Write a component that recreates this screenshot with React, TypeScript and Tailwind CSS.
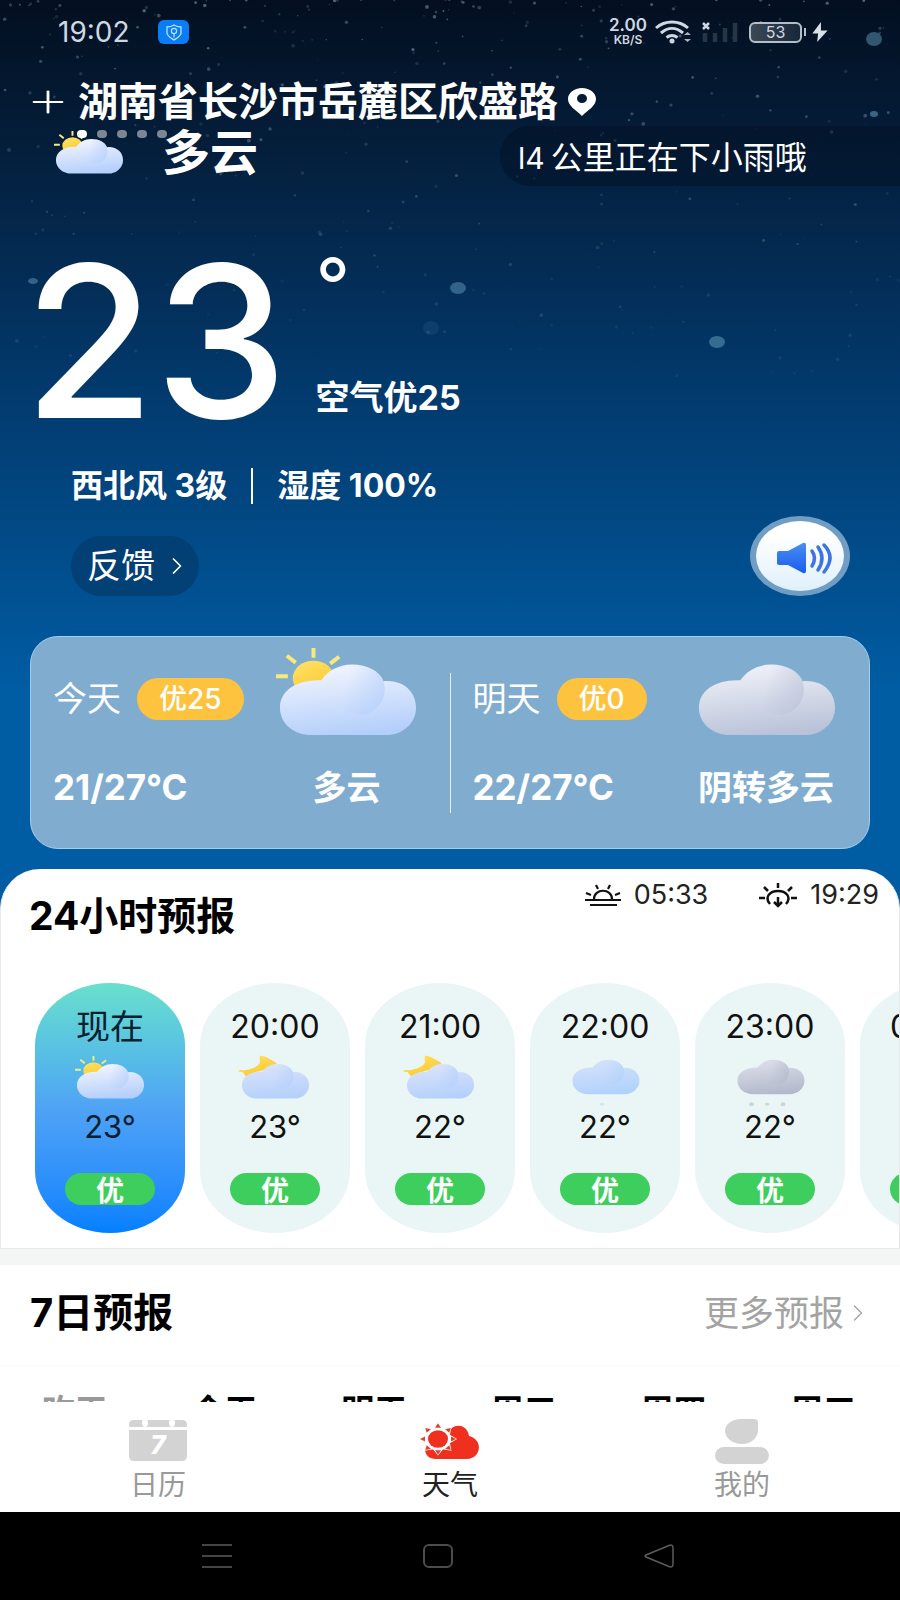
import React from 'react';
import { ChevronRight, Plus } from 'lucide-react';

type Sky = 'sunny' | 'night' | 'overcast' | 'cloudRain' | 'rain';

const CLOUD_COLORS: Record<Sky, [string, string]> = {
  sunny: ['#eef2fe', '#b3cffb'],
  night: ['#d8e2fb', '#b4d0fb'],
  overcast: ['#eceef6', '#b9c2d8'],
  cloudRain: ['#d3e0fa', '#b0d2fc'],
  rain: ['#d9dce8', '#b3b9cb'],
};

function SkyIcon({ sky, className }: { sky: Sky; className?: string }) {
  const [from, to] = CLOUD_COLORS[sky];
  const id = `cloud-${sky}`;
  const raining = sky === 'rain' || sky === 'cloudRain';

  return (
    <svg viewBox="0 0 144 92" preserveAspectRatio="none" className={className} overflow="visible" aria-hidden="true">
      <defs>
        <linearGradient id={id} x1="0.3" y1="0.1" x2="0.5" y2="1">
          <stop offset="0" stopColor={from} />
          <stop offset="1" stopColor={to} />
        </linearGradient>
        <linearGradient id={`${id}-top`} x1="0" y1="0.3" x2="1" y2="0.5">
          <stop offset="0.4" stopColor={to} stopOpacity="0" />
          <stop offset="1" stopColor={to} stopOpacity="0.6" />
        </linearGradient>
        <linearGradient id="sun" x1="0" y1="0" x2="0.5" y2="1">
          <stop offset="0" stopColor="#ffe36b" />
          <stop offset="1" stopColor="#fbc92f" />
        </linearGradient>
      </defs>
      {sky === 'sunny' && (
        <g>
          <path d="M0 31h12M11 10l9 7M38 2v10M64 11l-9 7" stroke="#f6ea7c" strokeWidth="4" />
          <ellipse cx="38" cy="33" rx="21" ry="18" fill="url(#sun)" />
        </g>
      )}
      {sky === 'night' && (
        <path d="M42 1L54 4 76 17 52 30C38 36 28 34 18 45C14 50 10 42 6 36L-4 34C0 28 8 34 14 31C26 28 34 26 40 18C43 14 38 6 42 1Z" fill="url(#sun)" />
      )}
      <g transform={raining ? 'translate(1 -9)' : undefined}>
        <path
          d="M36 91C18 91 4 79 4 63C4 46 20 34 46 35C52 26 63 19 77 19C93 19 105 26 109 36C128 34 142 46 142 63C142 79 128 91 112 91Z"
          fill={`url(#${id})`}
        />
        <path d="M46 35C52 26 63 19 77 19C93 19 105 26 109 36C113 48 108 60 98 67C80 78 56 60 46 35Z" fill={`url(#${id}-top)`} />
      </g>
      {raining && <ellipse cx="66" cy="103" rx="5" ry="3" fill="#cdd8e4" opacity={sky === 'rain' ? 1 : 0.6} />}
      {sky === 'rain' && (
        <g fill="#cdd3de">
          <ellipse cx="34" cy="103" rx="5" ry="4" />
          <ellipse cx="99" cy="103" rx="5" ry="4" />
        </g>
      )}
    </svg>
  );
}

// Small deterministic generator so the sky looks the same on every render
function makeStars(count: number) {
  let seed = 19;
  const next = () => {
    seed = (seed * 16807) % 2147483647;
    return seed / 2147483647;
  };
  return Array.from({ length: count }, () => {
    const y = Math.pow(next(), 1.7) * 380;
    return { x: next() * 900, y, r: 0.6 + next() * 1.3, o: (0.12 + next() * 0.4) * (1 - y / 480) };
  });
}

const STARS = makeStars(330);

function Stars() {
  return (
    <svg
      viewBox="0 0 900 500"
      preserveAspectRatio="xMidYMin slice"
      className="pointer-events-none absolute inset-x-0 top-0 h-[500px] w-full"
      aria-hidden="true"
    >
      {STARS.map((s, i) => (
        <circle key={i} cx={s.x} cy={s.y} r={s.r} fill="#9fb8cf" opacity={s.o} />
      ))}
      <g fill="#5f9ab8">
        <ellipse cx="874" cy="39" rx="8" ry="7" opacity="0.5" />
        <ellipse cx="458" cy="288" rx="8" ry="6" opacity="0.5" />
        <ellipse cx="717" cy="342" rx="8" ry="6" opacity="0.55" />
        <ellipse cx="33" cy="281" rx="5" ry="3" opacity="0.5" />
        <ellipse cx="874" cy="114" rx="4" ry="3" opacity="0.6" />
        <ellipse cx="431" cy="328" rx="8" ry="7" opacity="0.12" />
      </g>
    </svg>
  );
}

function StatusBar() {
  return (
    <div className="flex h-16 items-center pr-[72px] pl-[58px] text-[#cfd8e2]">
      <span className="text-[28px]">19:02</span>
      <svg viewBox="0 0 32 24" className="ml-7 h-6 w-8" aria-hidden="true">
        <rect width="31" height="24" rx="6" fill="#0a7cf5" />
        <path d="M16 5C13 7 11 7 9 7v6c0 3 4 5 7 7 3-2 7-4 7-7V7c-2 0-4 0-7-2Z" fill="none" stroke="#b9e2ff" strokeWidth="1.3" />
        <circle cx="16" cy="11" r="2.6" fill="none" stroke="#b9e2ff" strokeWidth="1.2" />
        <path d="M16 13.500v4" stroke="#b9e2ff" strokeWidth="1.2" />
      </svg>
      <div className="ml-auto flex items-center">
        <div className="flex flex-col items-center font-semibold">
          <span className="text-[17px] leading-4">2.00</span>
          <span className="text-xs leading-[14px]">KB/S</span>
        </div>
        <svg viewBox="0 0 38 24" className="ml-2 h-6 w-[38px]" fill="none" stroke="#cfd8e2" strokeWidth="3" aria-hidden="true">
          <path d="M1 8C10 0 24 0 33 8M6 13C13 7 21 7 28 13M11.500 17.500c4-3 7-3 11 0" />
          <circle cx="17" cy="21" r="2.500" fill="#cfd8e2" stroke="none" />
          <path d="M29 15l3.500-3 3.500 3ZM29 19l3.500 3 3.500-3Z" fill="#aab4be" stroke="none" />
        </svg>
        <svg viewBox="0 0 38 24" className="ml-2 h-6 w-[38px]" aria-hidden="true">
          <path d="M2 3l6 6M8 3l-6 6" stroke="#cfd8e2" strokeWidth="2.500" />
          <path d="M4 22v-9M14 22v-9M24 22V8M34 22V3" stroke="#273644" strokeWidth="4.500" />
        </svg>
        <div className="ml-2.5 flex h-[21px] w-[53px] items-center justify-center rounded-md border-2 border-[#b4bec8] bg-linear-to-r from-[#3c4956] to-[#17283a] text-base leading-none">
          53
        </div>
        <span className="ml-0.5 h-2 w-0.5 bg-[#b4bec8]" />
        <svg viewBox="0 0 16 21" className="ml-1.5 h-5 w-4" fill="#d8e0e8" aria-hidden="true">
          <path d="M9 0L0 12h6l-1 9 11-12H9Z" />
        </svg>
      </div>
    </div>
  );
}

function Hero() {
  return (
    <header className="relative text-white">
      <Stars />
      <div className="relative">
        <StatusBar />

        <div className="mt-3.5 flex h-12 items-center pl-8">
          <button type="button" aria-label="添加城市">
            <Plus className="h-6 w-8" strokeWidth={1.4} preserveAspectRatio="none" viewBox="4 4 16 16" />
          </button>
          <h1 className="ml-3.5 text-[40px] leading-[52px] font-bold">湖南省长沙市岳麓区欣盛路</h1>
          <svg viewBox="0 0 28 28" className="ml-2.5 h-7 w-7" fill="currentColor" aria-hidden="true">
            <path fillRule="evenodd" d="M14 0C6 0 0 5 0 11c0 7 8 11 14 17 6-6 14-10 14-17C28 5 22 0 14 0Zm0 6a5 4.500 0 1 1 0 9 5 4.500 0 0 1 0-9Z" />
          </svg>
        </div>

        <div className="relative flex items-start pl-[54px]">
          <SkyIcon sky="sunny" className="mt-1 h-11 w-[70px]" />
          <div className="absolute top-1 left-[77px] flex gap-2.5">
            <span className="h-2 w-2.5 rounded-full bg-white" />
            <span className="h-2 w-2.5 rounded-full bg-[#7c8795]" />
            <span className="h-2 w-2.5 rounded-full bg-[#7c8795]" />
            <span className="h-2 w-2.5 rounded-full bg-[#7c8795]" />
            <span className="h-2 w-2.5 rounded-full bg-[#7c8795]" />
          </div>
          <span className="ml-[38px] text-[48px] leading-[54px] font-bold">多云</span>
          <div className="ml-auto h-[60px] w-[400px] rounded-l-full bg-[#020f24]/50 pl-[18px] text-[32px] leading-[64px]">
            <span className="mr-1.5 text-[30px]">l4</span>公里正在下小雨哦
          </div>
        </div>

        <div className="mt-[75px] flex pl-6">
          <span className="text-[212px] leading-[160px] font-medium">23</span>
          <div className="ml-7 flex flex-col justify-between">
            <span className="text-[76px] leading-[48px]">°</span>
            <span className="text-[34px] leading-[46px] font-bold">空气优25</span>
          </div>
        </div>

        <div className="mt-[47px] flex h-9 items-center pl-[71px] text-[32px] leading-10 font-bold">
          <span>西北风 3级</span>
          <span className="mx-6 h-9 w-0.5 bg-white" />
          <span>湿度 100%</span>
        </div>

        <div className="mt-3 flex items-end justify-between pr-[50px] pl-[71px]">
          <button type="button" className="flex h-[60px] items-center rounded-full bg-[#033a6b]/70 pr-2 pl-4 text-[34px] leading-10">
            反馈
            <ChevronRight className="ml-2 h-8 w-7" strokeWidth={1.5} />
          </button>
          <button type="button" aria-label="语音播报">
            <svg viewBox="0 0 100 80" className="h-20 w-[100px]">
              <defs>
                <linearGradient id="speaker" x1="0" y1="0" x2="0" y2="1">
                  <stop offset="0" stopColor="#4a8df0" />
                  <stop offset="1" stopColor="#1a5df0" />
                </linearGradient>
                <linearGradient id="disc" x1="0" y1="0" x2="0" y2="1">
                  <stop offset="0.2" stopColor="#fff" />
                  <stop offset="1" stopColor="#dff0fb" />
                </linearGradient>
              </defs>
              <ellipse cx="50" cy="40" rx="50" ry="40" fill="#6f9dc4" />
              <ellipse cx="50" cy="40" rx="44" ry="35" fill="url(#disc)" />
              <path d="M27 37q0-2 2-2h9l15-8q3-1 3 2v26q0 3-3 2l-15-8h-9q-2 0-2-2Z" fill="url(#speaker)" />
              <path d="M62 35q5 7 0 15M68 31q8 11 0 23M74 29q12 12 0 27" fill="none" stroke="#3f74e0" strokeWidth="3.500" strokeLinecap="round" />
            </svg>
          </button>
        </div>
      </div>
    </header>
  );
}

interface DayCardProps {
  day: string;
  air: string;
  temp: string;
  text: string;
  sky: Sky;
}

function DayCard({ day, air, temp, text, sky }: DayCardProps) {
  return (
    <div className="flex flex-1 justify-between pr-8 pl-[22px]">
      <div>
        <div className="mt-[38px] flex h-[48px] items-center">
          <span className="text-[34px] leading-10">{day}</span>
          <span className="ml-4 h-[42px] rounded-full bg-[#fdc33f] px-[22px] text-[28px] leading-[42px] font-medium">{air}</span>
        </div>
        <p className="mt-10 text-[35px] leading-[48px] font-bold">{temp}</p>
      </div>
      <div className="flex flex-col items-center">
        <SkyIcon sky={sky} className="mt-[9px] h-[90px] w-[142px]" />
        <p className="mt-7 text-[34px] leading-[48px] font-bold">{text}</p>
      </div>
    </div>
  );
}

interface Hour {
  time: string;
  sky: Sky;
  temp: string;
}

const HOURS: Hour[] = [
  { time: '现在', sky: 'sunny', temp: '23°' },
  { time: '20:00', sky: 'night', temp: '23°' },
  { time: '21:00', sky: 'night', temp: '22°' },
  { time: '22:00', sky: 'cloudRain', temp: '22°' },
  { time: '23:00', sky: 'rain', temp: '22°' },
  { time: '00:00', sky: 'rain', temp: '22°' },
];

function HourCard({ hour, active }: { hour: Hour; active: boolean }) {
  return (
    <li
      className={`flex h-[250px] w-[150px] shrink-0 flex-col items-center rounded-[75px/62px] ${
        active ? 'bg-linear-to-b from-[#69e0cb] via-[#4fa3f5] to-[#0080ff] text-[#06202f]' : 'bg-[#eaf6f6] text-[#111]'
      }`}
    >
      <span className={`mt-6 leading-10 ${active ? 'text-[34px]' : 'text-[32px]'}`}>{hour.time}</span>
      <SkyIcon sky={hour.sky} className="mt-2 h-[44px] w-[70px]" />
      <span className="mt-2 text-[31px] leading-10">{hour.temp}</span>
      <span className="mt-[26px] h-8 w-[90px] rounded-full bg-[#3ece5e] text-center text-[28px] leading-9 font-bold text-white">优</span>
    </li>
  );
}

function HourlyPanel() {
  return (
    <section className="mt-5 overflow-hidden rounded-t-[40px] border-x border-b border-[#e8eaea] bg-white pb-[15px] text-black">
      <div className="flex items-start justify-between pr-5 pl-7">
        <h2 className="mt-5 text-[39px] leading-[54px] font-bold">24小时预报</h2>
        <div className="mt-2 flex items-center text-[27px] leading-9 text-[#222]">
          <svg viewBox="0 0 38 24" className="mr-3 h-6 w-[38px]" fill="none" stroke="#111" strokeWidth="2.200" aria-hidden="true">
            <path d="M1 17h36M6 22h27M10 16C10 5 28 5 28 16M12 2l2 4M26 2l-2 4M2 10l5 2M36 10l-5 2" />
          </svg>
          05:33
          <svg viewBox="0 0 40 26" className="mr-3 ml-[50px] h-[26px] w-10" fill="none" stroke="#111" strokeWidth="2.500" aria-hidden="true">
            <path d="M1 16h6M33 16h6M20 1v5M6 5l4 4M34 5l-4 4M12 22C6 15 12 9 20 9S34 15 28 22M20 15v9M16 20l4 4 4-4" />
          </svg>
          19:29
        </div>
      </div>
      <ul className="mt-10 flex gap-[15px] pl-[34px]">
        {HOURS.map((h, i) => (
          <HourCard key={h.time} hour={h} active={i === 0} />
        ))}
      </ul>
    </section>
  );
}

const WEEK = ['昨天', '今天', '明天', '周三', '周四', '周五'];

function WeekPanel() {
  return (
    <section className="mt-4 bg-white">
      <div className="flex h-[101px] items-center justify-between border-b border-[#fafafa] pr-7 pb-1 pl-[30px]">
        <h2 className="text-[40px] leading-none font-bold text-black">7日预报</h2>
        <a href="#week" className="flex items-center text-[35px] leading-none text-[#a3a3a3]">
          更多预报
          <ChevronRight className="h-8 w-7" strokeWidth={1.2} />
        </a>
      </div>
      {/* Only the tops of the day names stay visible above the tab bar */}
      <div id="week" className="grid h-9 grid-cols-6 overflow-hidden pt-5 pr-0.5 text-center text-[33px] leading-[50px] font-bold text-black">
        {WEEK.map((d, i) => (
          <span key={d} className={i === 0 ? 'text-[#999]' : undefined}>
            {d}
          </span>
        ))}
      </div>
    </section>
  );
}

// Eight-pointed rays around the sun of the weather tab
const RAYS = [0, 45, 90, 135, 180, 225, 270, 315];

function TabBar() {
  return (
    <nav className="grid grid-cols-3 bg-white px-3 pt-4 pb-2 text-[28px] leading-[38px] text-[#999]">
      <a href="#calendar" className="flex flex-col items-center">
        <svg viewBox="0 0 60 44" className="h-11 w-[60px]" aria-hidden="true">
          <path d="M6 2h48q5 0 5 5v2H1V7q0-5 5-5ZM1 12h58v26q0 5-5 5H6q-5 0-5-5Z" fill="#d3d3d3" />
          <ellipse cx="17" cy="5" rx="3" ry="4" fill="#fff" />
          <ellipse cx="44" cy="5" rx="3" ry="4" fill="#fff" />
          <text x="30" y="36" textAnchor="middle" fontSize="26" fontWeight="800" fontStyle="italic" fill="#fff">
            7
          </text>
        </svg>
        <span className="mt-1">日历</span>
      </a>
      <a href="#weather" className="flex flex-col items-center text-[#222]">
        <svg viewBox="0 0 60 44" className="h-11 w-[60px]" aria-hidden="true">
          <path d="M16 41C9 41 5 37 5 31L18 14 28 17C30 5 47 4 49 18C63 21 62 40 47 41Z" fill="#f0301f" />
          <g transform="translate(18 21) scale(1 0.87)">
            {RAYS.map((a) => (
              <path key={a} d="M0-19L7-9H-7Z" fill="#fff" transform={`rotate(${a})`} />
            ))}
            <circle r="12.500" fill="#fff" />
            {RAYS.map((a) => (
              <path key={a} d="M0-18L3-13H-3Z" fill="#d9432f" transform={`rotate(${a})`} />
            ))}
            <circle r="10" fill="#f0301f" />
          </g>
        </svg>
        <span className="mt-1">天气</span>
      </a>
      <a href="#me" className="flex flex-col items-center">
        <svg viewBox="0 0 60 46" preserveAspectRatio="none" className="h-[46px] w-[60px]" fill="#d3d3d3" aria-hidden="true">
          <path d="M29 1h13q4 0 4 4v7c0 8-7 14-16 14S13 20 13 13 20 1 29 1Z" />
          <rect x="3" y="29" width="54" height="17" rx="9" />
        </svg>
        <span className="mt-0.5">我的</span>
      </a>
    </nav>
  );
}

function SystemNav() {
  return (
    <div className="grid flex-1 grid-cols-3 items-center bg-black pr-[130px] pl-[106px]">
      <button type="button" aria-label="菜单" className="flex h-[86px] items-center justify-center">
        <svg viewBox="0 0 30 24" className="h-6 w-[30px]" stroke="#5c5c5c" strokeWidth="1.500" aria-hidden="true">
          <path d="M0 1h30M0 12h30M0 23h30" />
        </svg>
      </button>
      <button type="button" aria-label="主页" className="flex h-[86px] items-center justify-center">
        <span className="h-6 w-[30px] rounded-md border-2 border-[#4c4c4c]" />
      </button>
      <button type="button" aria-label="返回" className="flex h-[86px] items-center justify-center">
        <svg viewBox="0 0 30 24" className="h-6 w-[30px]" fill="none" stroke="#5c5c5c" strokeWidth="1.500" aria-hidden="true">
          <path d="M2 11L25 1.500Q29 0 29 4v16Q29 24 25 22.500L2 13Q0 12 2 11Z" />
        </svg>
      </button>
    </div>
  );
}

export default function App() {
  return (
    <div className="flex min-h-screen flex-col overflow-hidden bg-[#f4f5f5] font-['Inter','Noto_Sans_CJK_SC',sans-serif]">
      <div className="bg-linear-to-b from-[#030f20] from-0% via-[#02386a] via-30% to-[#005ca3] to-55%">
        <Hero />
        <section className="mx-[30px] mt-10 flex h-[213px] rounded-[28px] border border-[#a3cdf0] bg-[#80adcf] text-white">
          <DayCard day="今天" air="优25" temp="21/27°C" text="多云" sky="sunny" />
          <span className="mt-9 h-[140px] w-px bg-white/80" />
          <DayCard day="明天" air="优0" temp="22/27°C" text="阴转多云" sky="overcast" />
        </section>
        <HourlyPanel />
      </div>
      <WeekPanel />
      <TabBar />
      <SystemNav />
    </div>
  );
}
